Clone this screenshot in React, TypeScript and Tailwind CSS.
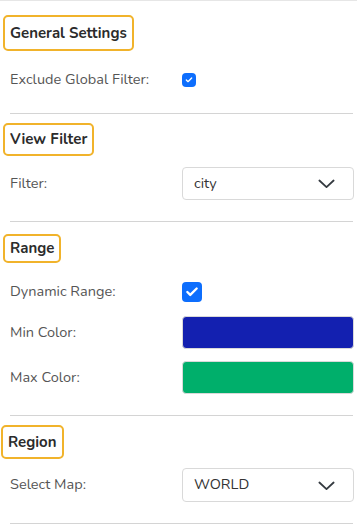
import { Check } from 'lucide-react';

const font = { fontFamily: '"Nunito", Lato, "Open Sans", sans-serif' };

function Heading({ label, className }: { label: string; className: string }) {
  return (
    <div
      className={`flex w-max items-center rounded-[5px] border-2 border-[#f1b32b] px-[5px] text-[15px] font-bold text-[#2b2b2b] ${className}`}
    >
      {label}
    </div>
  );
}

function Row({ label, children, className }: { label: string; children: React.ReactNode; className: string }) {
  return (
    <div className={`flex items-stretch pl-[10px] pr-[3px] ${className}`}>
      <span className="flex w-[172px] shrink-0 items-center text-[14.5px] text-[#555]">{label}</span>
      <div className="flex flex-1 items-center">{children}</div>
    </div>
  );
}

function Box({ size }: { size: number }) {
  return (
    <span
      className="flex items-center justify-center rounded-[4px] bg-[#0d6efd] text-white"
      style={{ width: size, height: size }}
    >
      <Check size={size - 6} strokeWidth={4} />
    </span>
  );
}

function Select({ value }: { value: string }) {
  return (
    <div className="flex h-full w-full items-center justify-between rounded-[4px] border border-[#d9d9d9] bg-white pl-[11px] pr-[17px] text-[14.5px] text-[#333]">
      <span>{value}</span>
      <svg width="19" height="19" viewBox="0 0 16 16" fill="none" stroke="#343a40" strokeWidth="1.5" strokeLinecap="round" strokeLinejoin="round">
        <path d="m2 5.5 6 5.5 6-5.5" />
      </svg>
    </div>
  );
}

const Divider = () => <div className="ml-[10px] mr-[4px] h-px bg-[#d4d4d4]" />;

export default function App() {
  return (
    <div className="min-h-[528px] w-[357px] border-t border-[#e6e6e6] bg-white" style={font}>
      <div className="px-[3px]">
        <Heading label="General Settings" className="mt-[14px] h-[36px]" />
      </div>
      <Row label="Exclude Global Filter:" className="mt-[12px] h-[33px]">
        <Box size={14} />
      </Row>
      <div className="mt-[17px]">
        <Divider />
      </div>

      <div className="px-[3px]">
        <Heading label="View Filter" className="mt-[9px] h-[33px]" />
      </div>
      <Row label="Filter:" className="mt-[11px] h-[33px]">
        <Select value="city" />
      </Row>
      <div className="mt-[21px]">
        <Divider />
      </div>

      <div className="px-[3px]">
        <Heading label="Range" className="mt-[12px] h-[29px]" />
      </div>
      <Row label="Dynamic Range:" className="mt-[12px] h-[33px]">
        <Box size={20} />
      </Row>
      <Row label="Min Color:" className="mt-[8px] h-[33px]">
        <div className="h-full w-full rounded-[4px] border border-[#d9d9d9] bg-[#1320b0]" />
      </Row>
      <Row label="Max Color:" className="mt-[12px] h-[33px]">
        <div className="h-full w-full rounded-[4px] border border-[#d9d9d9] bg-[#00af6b]" />
      </Row>
      <div className="mt-[21px]">
        <Divider />
      </div>

      <div className="px-[1px]">
        <Heading label="Region" className="mt-[9px] h-[34px]" />
      </div>
      <Row label="Select Map:" className="mt-[9px] h-[34px]">
        <Select value="WORLD" />
      </Row>
      <div className="mt-[21px]">
        <Divider />
      </div>
    </div>
  );
}
